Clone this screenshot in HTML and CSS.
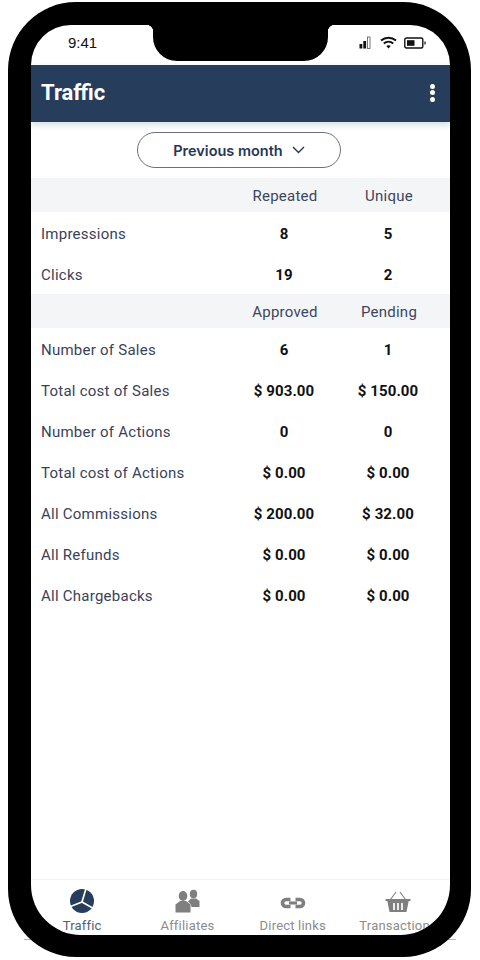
FILE: index.html
```html
<!DOCTYPE html>
<html lang="en">
<head>
<meta charset="utf-8">
<title>Traffic</title>
<link rel="stylesheet" href="styles.css">
</head>
<body>
<div class="stage">
  <div class="phone">
    <div class="notch"></div>
    <div class="screen">
      <div class="status">
        <span class="time">9:41</span>
        <div class="status-icons">
          <svg width="13" height="13" viewBox="0 0 13 13"><rect x="0.500" y="8" width="2.800" height="4.500" fill="#111"/><rect x="4.300" y="5" width="2.800" height="7.500" fill="#111"/><rect x="8.400" y="1" width="2.600" height="11.500" fill="none" stroke="#555" stroke-width=".8"/></svg>
          <svg width="17" height="13" viewBox="0 0 17 13"><path d="M1 4.600C5.300.8 11.700.8 16 4.600" fill="none" stroke="#111" stroke-width="2"/><path d="M3.800 7.500c2.700-2.300 6.700-2.300 9.400 0" fill="none" stroke="#111" stroke-width="2"/><path d="M6.300 10c1.300-1 3.100-1 4.400 0L8.500 12.400z" fill="#111"/></svg>
          <svg width="22" height="12" viewBox="0 0 22 12"><rect x=".8" y="1" width="18" height="10" rx="1.500" fill="none" stroke="#111" stroke-width="1.400"/><rect x="3" y="3.200" width="7.500" height="5.600" fill="#111"/><rect x="20.300" y="4.500" width="1.400" height="3" fill="#333"/></svg>
        </div>
      </div>
      <header class="appbar">
        <h1 class="title">Traffic</h1>
        <div class="menu"><i></i><i></i><i></i></div>
      </header>
      <div class="filter">
        <div class="pill">Previous month
          <svg width="13" height="8" viewBox="0 0 13 8"><path d="M1 1l5.500 5.500L12 1" fill="none" stroke="#263656" stroke-width="1.400"/></svg>
        </div>
      </div>
      <div class="row head"><span></span><span>Repeated</span><span>Unique</span></div>
      <div class="row"><span class="name">Impressions</span><b>8</b><b>5</b></div>
      <div class="row"><span class="name">Clicks</span><b>19</b><b>2</b></div>
      <div class="row head"><span></span><span>Approved</span><span>Pending</span></div>
      <div class="row"><span class="name">Number of Sales</span><b>6</b><b>1</b></div>
      <div class="row"><span class="name">Total cost of Sales</span><b>$ 903.00</b><b>$ 150.00</b></div>
      <div class="row"><span class="name">Number of Actions</span><b>0</b><b>0</b></div>
      <div class="row"><span class="name">Total cost of Actions</span><b>$ 0.00</b><b>$ 0.00</b></div>
      <div class="row"><span class="name">All Commissions</span><b>$ 200.00</b><b>$ 32.00</b></div>
      <div class="row"><span class="name">All Refunds</span><b>$ 0.00</b><b>$ 0.00</b></div>
      <div class="row"><span class="name">All Chargebacks</span><b>$ 0.00</b><b>$ 0.00</b></div>
      <nav class="tabs">
        <div class="tab active">
          <svg width="26" height="26" viewBox="0 0 26 26"><circle cx="13" cy="13" r="12" fill="#263d5b"/><path d="M13 14L17 .5M13 14L24.500 20.500M13 14L1.500 18.500" stroke="#fff" stroke-width="1.700" fill="none"/></svg>
          <span>Traffic</span>
        </div>
        <div class="tab">
          <svg width="26" height="26" viewBox="0 0 26 26"><ellipse cx="19.500" cy="6" rx="3.700" ry="4.300" fill="#7f7f7f"/><path d="M17 10.500h5l3.500 2.500v6H17.500c-.3-2.500-1.500-4-3.500-5.500z" fill="#7f7f7f"/><ellipse cx="9" cy="8" rx="4.300" ry="5" fill="#7f7f7f"/><path d="M6 13h6l4.500 3.500v8H1.500v-8z" fill="#7f7f7f"/></svg>
          <span>Affiliates</span>
        </div>
        <div class="tab">
          <svg width="26" height="26" viewBox="0 0 26 26"><path d="M10.500 11.500H6a3.500 3.500 0 0 0 0 7h4.500M15.500 11.500H20a3.500 3.500 0 0 1 0 7h-4.500" fill="none" stroke="#7f7f7f" stroke-width="3.600"/><path d="M9 15h8" stroke="#7f7f7f" stroke-width="2.800"/></svg>
          <span>Direct links</span>
        </div>
        <div class="tab">
          <svg width="26" height="26" viewBox="0 0 26 26"><path d="M5.500 11.500L11 4M20.500 11.500L15 4" fill="none" stroke="#7f7f7f" stroke-width="1.100"/><path d="M.5 11h25v2h-1.800l-2.200 11h-17L2.300 13H.5z" fill="#7f7f7f"/><path d="M9 15v7M13 15v7M17 15v7" stroke="#fff" stroke-width="1.700"/></svg>
          <span>Transactions</span>
        </div>
      </nav>
    </div>
  </div>
</div>
</body>
</html>
```
FILE: styles.css
```css
* { box-sizing: border-box; }
html, body { margin: 0; padding: 0; background: #fff; }
body { width: 480px; height: 960px; overflow: hidden; font-family: Roboto, "Liberation Sans", sans-serif; }
.stage { position: relative; width: 480px; height: 960px; padding: 2px 0 0 8px; }
.stage::before { content: ""; position: absolute; left: 24px; top: 939px; width: 432px; height: 1px; background: #b5b5b5; }
.phone { position: relative; width: 463px; height: 955px; background: #000; border-radius: 68px; padding: 23px 21px 22px 23px; }
.notch { position: absolute; z-index: 2; left: 145px; top: 23px; width: 175px; height: 36px; background: #000; border-radius: 0 0 24px 24px; }
.notch::before, .notch::after { content: ""; position: absolute; top: 0; width: 7px; height: 7px; }
.notch::before { left: -7px; background: radial-gradient(circle at 0 100%, transparent 7px, #000 7.500px); }
.notch::after { right: -7px; background: radial-gradient(circle at 100% 100%, transparent 7px, #000 7.500px); }
.screen { display: flex; flex-direction: column; width: 419px; height: 910px; background: #fff; border-radius: 40px 40px 50px 50px; overflow: hidden; }
.status { display: flex; justify-content: space-between; align-items: center; height: 40px; flex: none; padding: 0 24px 5px 37px; }
.time { font-family: "Liberation Sans", sans-serif; font-size: 15px; color: #111; }
.status-icons { display: flex; align-items: center; gap: 7.500px; }
.appbar { display: flex; justify-content: space-between; align-items: center; flex: none; height: 57px; padding: 0 15px 2px 10px; background: #263d5b; box-shadow: 0 3px 6px rgba(38, 61, 91, .18); position: relative; }
.title { margin: 0; font-size: 22px; font-weight: 700; color: #fff; }
.menu { display: flex; flex-direction: column; gap: 1.500px; }
.menu i { display: block; width: 5px; height: 5px; border-radius: 50%; background: #fff; }
.filter { display: flex; justify-content: center; align-items: center; flex: none; height: 56px; padding: 0 3px 0 0; }
.pill { display: flex; align-items: center; justify-content: center; gap: 9px; width: 204px; height: 36px; border: 1.500px solid #6a7080; border-radius: 18px; font-family: Inter, sans-serif; font-size: 14.500px; font-weight: 600; color: #263656; }
.row { display: grid; grid-template-columns: 202px 104px 104px; align-items: center; height: 41px; flex: none; padding-top: 2px; text-align: center; font-size: 15px; color: #111; letter-spacing: .25px; }
.row .name { text-align: left; padding-left: 10px; color: #3a4258; }
.row b { font-weight: 700; font-size: 15px; letter-spacing: .1px; padding-right: 2px; }
.head { height: 34px; background: #f4f5f6; color: #3d4560; }
.tabs { display: grid; grid-template-columns: repeat(4, 105.300px); margin: auto 0 0 -1.500px; width: 422px; height: 56px; flex: none; border-top: 1px solid #f3f3f3; }
.tab { display: flex; flex-direction: column; align-items: center; padding-top: 8px; font-size: 13px; letter-spacing: .2px; color: #8c8c8c; white-space: nowrap; gap: 4px; }
.tab svg { flex: none; }
.tab.active { color: #54606f; }
```
